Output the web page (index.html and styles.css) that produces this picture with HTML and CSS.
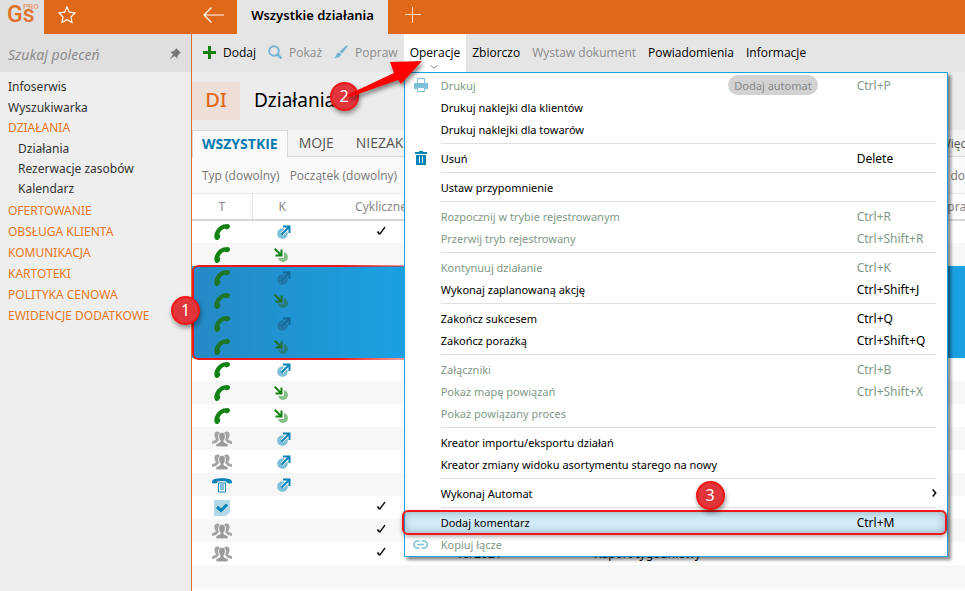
FILE: index.html
```html
<!DOCTYPE html>
<html lang="pl">
<head>
  <meta charset="UTF-8" />
  <meta name="viewport" content="width=device-width, initial-scale=1.0" />
  <title>Wszystkie działania</title>
  <link rel="stylesheet" href="styles.css">
</head>
<body>
  <svg class="sprite" aria-hidden="true">
    <symbol id="i-phone" viewBox="0 0 16 16"><path fill="#128212" d="M.3 12C.5 7.500 4.500 1.500 9.500.4L13.500 0C15.300.2 16.300 1.600 15.900 3L15.200 4.300C14.200 5.400 12.600 5.500 11.400 4.900L10.500 4.600C8 5.500 6 7.800 5.300 10.200L6 11C6.500 12 6.300 13.200 5.600 14L4.500 15.500C3.600 16.300 1.900 16.200 1.200 15.200Q.2 14 .3 12Z"/></symbol>
    <symbol id="i-out" viewBox="0 0 14 14"><circle cx="5.500" cy="8.500" r="5.300" fill="#80bfda"/><path stroke="#fff" stroke-width="3.500" d="M5 9L11 3"/><path fill="none" stroke="#0783b5" stroke-width="2" d="M4.500 9.500L12 2M6 1.500H12.500V8"/></symbol>
    <symbol id="i-in" viewBox="0 0 14 14"><circle cx="9" cy="9" r="5" fill="#88bf88"/><path fill="none" stroke="#fff" stroke-width="3" d="M2 2L8 8M8.500 2.500V8.500H3"/><path fill="none" stroke="#128212" stroke-width="2" d="M.7.7L7 7M7.500 1.500V7.500H1.500"/></symbol>
    <symbol id="i-out-sel" viewBox="0 0 14 14"><circle cx="5.500" cy="8.500" r="5.300" fill="#1c80b4"/><path stroke="#2a90ca" stroke-width="3.500" d="M5 9L11 3"/><path fill="none" stroke="#0b70a4" stroke-width="2" d="M4.500 9.500L12 2M6 1.500H12.500V8"/></symbol>
    <symbol id="i-in-sel" viewBox="0 0 14 14"><circle cx="9" cy="9" r="5" fill="#21887c"/><path fill="none" stroke="#2a90ca" stroke-width="3" d="M2 2L8 8M8.500 2.500V8.500H3"/><path fill="none" stroke="#187a1c" stroke-width="2" d="M.7.7L7 7M7.500 1.500V7.500H1.500"/></symbol>
    <symbol id="i-group" viewBox="0 0 20 16"><g fill="#a3a3a3"><path d="M3 1.500Q6-.5 8 2L6 5L7 9L4 12L0 13V10.500L4 8.500Q1.500 5 3 1.500Z"/><path d="M17 1.500Q14-.5 12 2L14 5L13 9L16 12L20 13V10.500L16 8.500Q18.500 5 17 1.500Z"/></g><path fill="#999" stroke="#fff" stroke-width=".6" d="M10 1.500C12.700 1.500 13.600 3.500 13.200 6Q12.800 8.500 11.800 9.500V11L16 13V15.800H4V13L8.200 11V9.500Q7.200 8.500 6.800 6C6.400 3.500 7.300 1.500 10 1.500Z"/></symbol>
    <symbol id="i-desk" viewBox="0 0 20 15"><path fill="#0783b5" d="M0 4.500C0 1.700 4 .7 10 .7S20 1.700 20 4.500V5.500Q17 6.500 14.500 5V4Q10 3 5.500 4V5Q3 6.500 0 5.500Z"/><path fill="#fff" stroke="#0783b5" d="M6.500 5.500H13.500V14.500H6.500Z"/><path stroke="#0783b5" d="M8 7.500H12M8 9.500H12M8 11.500H12"/></symbol>
    <symbol id="i-task" viewBox="0 0 16 16"><path fill="#b3d9e8" d="M0 0H16V12L12 16H0Z"/><path fill="none" stroke="#0783b5" stroke-width="3" d="M3 7L7 10.500L13 4.500"/></symbol>
    <symbol id="i-check" viewBox="0 0 10 10"><path fill="none" stroke="#111" stroke-width="2" d="M1.500 5.500L3.500 8"/><path fill="none" stroke="#111" stroke-width="1.300" d="M3.500 8.500L9 1"/></symbol>
  </svg>

  <div class="app">
    <header class="topbar">
      <div class="logo"><span class="logo-gs">Gs</span><span class="logo-pro">PRO</span></div>
      <button class="icon-btn star" aria-label="Ulubione"><svg width="18" height="18" viewBox="0 0 18 18"><path fill="none" stroke="#fff" stroke-width="1.200" d="M9 1L11.400 6.200L17 7L13 11L14 16.500L9 13.800L4 16.500L5 11L1 7L6.600 6.200Z"/></svg></button>
      <button class="icon-btn back" aria-label="Wstecz"><svg width="22" height="16" viewBox="0 0 22 16"><path fill="none" stroke="#fff" stroke-width="1.200" d="M21 8H1M8.500.5L1 8L8.500 15.500"/></svg></button>
      <button class="page-tab">Wszystkie działania</button>
      <button class="icon-btn add" aria-label="Nowa karta"><svg width="16" height="16" viewBox="0 0 16 16"><path stroke="#f8d8c0" d="M0 7.500H16M7.500 0V16"/></svg></button>
    </header>

    <div class="body">
      <aside class="sidebar">
        <div class="search">
          <input type="text" placeholder="Szukaj poleceń" aria-label="Szukaj poleceń" />
          <svg width="12" height="12" viewBox="0 0 12 12"><path fill="#777" d="M7 0L12 5L10.500 5.500L8.500 8L8.500 10.500L5.500 8L.5 11.500L4 6.500L1.500 3.500H4L6.500 1.500Z"/></svg>
        </div>
        <nav class="nav">
          <a href="#">Infoserwis</a>
          <a href="#">Wyszukiwarka</a>
          <a href="#" class="group open-group">DZIAŁANIA</a>
          <a href="#" class="sub">Działania</a>
          <a href="#" class="sub">Rezerwacje zasobów</a>
          <a href="#" class="sub">Kalendarz</a>
          <a href="#" class="group">OFERTOWANIE</a>
          <a href="#" class="group">OBSŁUGA KLIENTA</a>
          <a href="#" class="group">KOMUNIKACJA</a>
          <a href="#" class="group">KARTOTEKI</a>
          <a href="#" class="group">POLITYKA CENOWA</a>
          <a href="#" class="group">EWIDENCJE DODATKOWE</a>
        </nav>
      </aside>

      <main class="content">
        <div class="toolbar">
          <button class="tool with-icon"><svg width="13" height="13" viewBox="0 0 13 13"><path stroke="#128212" stroke-width="3" d="M0 6.500H13M6.500 0V13"/></svg>Dodaj</button>
          <button class="tool with-icon off"><svg width="14" height="14" viewBox="0 0 14 14"><circle cx="6" cy="6" r="4.800" fill="none" stroke="#73b5d3" stroke-width="2"/><path stroke="#73b5d3" stroke-width="2.500" d="M9 9L13.500 13.500"/></svg>Pokaż</button>
          <button class="tool with-icon off"><svg width="14" height="14" viewBox="0 0 15 14"><path fill="#73b5d3" d="M14.500 0Q15 1 14 2L8.500 9L6 6.500L12.500.5ZM5.500 7.500L7.800 9.800Q7 13.500 0 13.500Q2.300 12 2.500 10Q3.300 7.500 5.500 7.500Z"/></svg>Popraw</button>
          <div class="dropdown">
            <button class="tool open">Operacje<svg class="chev" width="8" height="4" viewBox="0 0 8 4"><path fill="none" stroke="#888" d="M.5.5L4 3L7.500.5"/></svg></button>
            <div class="menu">
              <button class="item off"><svg width="14" height="14" viewBox="0 0 14 14"><path fill="#80bfda" d="M0 5H14V11H11V9H3V11H0Z"/><path fill="#fff" stroke="#80bfda" d="M3.500.5H10.500V5.500H3.500ZM3.500 9.500H10.500V13.500H3.500Z"/></svg><span>Drukuj</span><kbd>Ctrl+P</kbd><i class="ghost">Dodaj automat</i></button>
              <button class="item"><span>Drukuj naklejki dla klientów</span></button>
              <button class="item"><span>Drukuj naklejki dla towarów</span></button>
              <hr>
              <button class="item"><svg width="12" height="14" viewBox="0 0 12 14"><path fill="#0783b5" d="M4 0H8V1H12V3H0V1H4ZM1 4H11V14H1Z"/><path stroke="#fff" d="M4.500 5.500V12M7.500 5.500V12"/></svg><span>Usuń</span><kbd>Delete</kbd></button>
              <hr>
              <button class="item"><span>Ustaw przypomnienie</span></button>
              <hr>
              <button class="item off"><span>Rozpocznij w trybie rejestrowanym</span><kbd>Ctrl+R</kbd></button>
              <button class="item off"><span>Przerwij tryb rejestrowany</span><kbd>Ctrl+Shift+R</kbd></button>
              <hr>
              <button class="item off"><span>Kontynuuj działanie</span><kbd>Ctrl+K</kbd></button>
              <button class="item"><span>Wykonaj zaplanowaną akcję</span><kbd>Ctrl+Shift+J</kbd></button>
              <hr>
              <button class="item"><span>Zakończ sukcesem</span><kbd>Ctrl+Q</kbd></button>
              <button class="item"><span>Zakończ porażką</span><kbd>Ctrl+Shift+Q</kbd></button>
              <hr>
              <button class="item off"><span>Załączniki</span><kbd>Ctrl+B</kbd></button>
              <button class="item off"><span>Pokaż mapę powiązań</span><kbd>Ctrl+Shift+X</kbd></button>
              <button class="item off"><span>Pokaż powiązany proces</span></button>
              <hr>
              <button class="item"><span>Kreator importu/eksportu działań</span></button>
              <button class="item"><span>Kreator zmiany widoku asortymentu starego na nowy</span></button>
              <hr>
              <button class="item"><span>Wykonaj Automat</span><svg class="more" width="5" height="8" viewBox="0 0 5 8"><path fill="none" stroke="#000" stroke-width="1.500" d="M.7.5L3.700 4L.7 7.500"/></svg></button>
              <hr>
              <button class="item active"><span>Dodaj komentarz</span><kbd>Ctrl+M</kbd><b class="mark mark-item"></b><b class="step step-3">3</b></button>
              <button class="item off"><svg width="15" height="9" viewBox="0 0 15 9"><path fill="none" stroke="#80bfda" stroke-width="1.600" d="M6.500 1H4.300A3.500 3.500 0 0 0 4.300 8H6.500M8.500 1H10.700A3.500 3.500 0 0 1 10.700 8H8.500M4 4.500H11"/></svg><span>Kopiuj łącze</span></button>
            </div>
            <svg class="arrow" width="90" height="50" viewBox="0 0 90 50"><path fill="#f00" d="M3 37L50 15L46 4L78 3L57 26L54 22L6 39Z"/></svg>
            <b class="step step-2">2</b>
          </div>
          <button class="tool">Zbiorczo</button>
          <button class="tool off">Wystaw dokument</button>
          <button class="tool">Powiadomienia</button>
          <button class="tool">Informacje</button>
        </div>

        <div class="title"><span class="badge">DI</span><h1>Działania</h1></div>

        <div class="tabs">
          <button class="tab current">WSZYSTKIE</button>
          <button class="tab">MOJE</button>
          <button class="tab">NIEZAKOŃCZONE</button>
          <button class="tab last">Więcej</button>
        </div>

        <div class="filters">
          <button>Typ (dowolny)</button>
          <button>Początek (dowolny)</button>
          <button class="last">Kontakt do</button>
        </div>

        <div class="grid">
          <table>
            <colgroup><col class="c-t"><col class="c-k"><col class="c-c"><col class="c-n"><col><col class="c-o"></colgroup>
            <thead><tr><th>T</th><th>K</th><th>Cykliczne</th><th></th><th></th><th>Opracował</th></tr></thead>
            <tbody>
              <tr><td><svg class="ph"><use href="#i-phone"/></svg></td><td><svg class="dir"><use href="#i-out"/></svg></td><td><svg class="chk"><use href="#i-check"/></svg></td><td></td><td></td><td></td></tr>
              <tr><td><svg class="ph"><use href="#i-phone"/></svg></td><td><svg class="dir in"><use href="#i-in"/></svg></td><td></td><td></td><td></td><td></td></tr>
              <tr class="sel"><td><svg class="ph"><use href="#i-phone"/></svg></td><td><svg class="dir"><use href="#i-out-sel"/></svg></td><td></td><td></td><td></td><td></td></tr>
              <tr class="sel"><td><svg class="ph"><use href="#i-phone"/></svg></td><td><svg class="dir in"><use href="#i-in-sel"/></svg></td><td></td><td></td><td></td><td></td></tr>
              <tr class="sel"><td><svg class="ph"><use href="#i-phone"/></svg></td><td><svg class="dir"><use href="#i-out-sel"/></svg></td><td></td><td></td><td></td><td></td></tr>
              <tr class="sel"><td><svg class="ph"><use href="#i-phone"/></svg></td><td><svg class="dir in"><use href="#i-in-sel"/></svg></td><td></td><td></td><td></td><td></td></tr>
              <tr><td><svg class="ph"><use href="#i-phone"/></svg></td><td><svg class="dir"><use href="#i-out"/></svg></td><td></td><td></td><td></td><td></td></tr>
              <tr><td><svg class="ph"><use href="#i-phone"/></svg></td><td><svg class="dir in"><use href="#i-in"/></svg></td><td></td><td></td><td></td><td></td></tr>
              <tr><td><svg class="ph"><use href="#i-phone"/></svg></td><td><svg class="dir in"><use href="#i-in"/></svg></td><td></td><td></td><td></td><td></td></tr>
              <tr><td><svg class="grp"><use href="#i-group"/></svg></td><td><svg class="dir"><use href="#i-out"/></svg></td><td></td><td></td><td></td><td></td></tr>
              <tr><td><svg class="grp"><use href="#i-group"/></svg></td><td><svg class="dir"><use href="#i-out"/></svg></td><td></td><td></td><td></td><td></td></tr>
              <tr><td><svg class="grp"><use href="#i-desk"/></svg></td><td><svg class="dir"><use href="#i-out"/></svg></td><td></td><td></td><td></td><td></td></tr>
              <tr><td><svg class="ph"><use href="#i-task"/></svg></td><td></td><td><svg class="chk"><use href="#i-check"/></svg></td><td></td><td></td><td></td></tr>
              <tr><td><svg class="grp"><use href="#i-group"/></svg></td><td></td><td><svg class="chk"><use href="#i-check"/></svg></td><td></td><td></td><td></td></tr>
              <tr><td><svg class="grp"><use href="#i-group"/></svg></td><td></td><td><svg class="chk"><use href="#i-check"/></svg></td><td>10/2021</td><td>Raport tygodniowy</td><td></td></tr>
              <tr><td></td><td></td><td></td><td></td><td></td><td></td></tr>
            </tbody>
          </table>
          <b class="mark mark-rows"></b>
          <b class="step step-1">1</b>
        </div>
      </main>
    </div>
  </div>
</body>
</html>
```
FILE: styles.css
```css
* { margin:0; padding:0; box-sizing:border-box; }
body {
  font-family:"Noto Sans", "Open Sans", sans-serif;
  font-size:12px; color:#000; background:#fff;
  height:100vh; overflow:hidden;
}
button { font:inherit; color:inherit; background:none; border:none; cursor:pointer; white-space:nowrap; }
a { text-decoration:none; color:inherit; }
svg { flex:none; }
.sprite { position:absolute; width:0; height:0; }
.app { display:flex; flex-direction:column; height:100%; }

.topbar { display:flex; align-items:stretch; height:34px; background:#df6919; flex:none; }
.logo { width:44px; background:#e0e0e0; color:#e0702a; display:flex; padding-left:7px; align-items:flex-start; }
.logo-gs { font:500 23px/30px Roboto, sans-serif; width:16px; }
.logo-pro { font:500 8px/14px Roboto, sans-serif; color:#e39468; }
.icon-btn { display:flex; align-items:center; justify-content:center; width:46px; padding-bottom:4px; }
.star + .back { margin-left:100px; width:47px; }
.page-tab { background:#e5e5e5; font-size:13px; font-weight:600; width:151px; padding-bottom:5px; }
.add { width:50px; }

.body { flex:1; display:flex; min-height:0; }
.sidebar { width:192px; flex:none; background:#eee; border-right:1px solid #d8702c; }
.search { display:flex; align-items:center; height:38px; padding:2px 10px 0 8px; background:#dfdfdf; }
.search input { flex:1; min-width:0; border:none; outline:none; background:none; font:italic 14px "Noto Sans", sans-serif; }
.search input::placeholder { color:#8c8c8c; }
.nav { display:flex; flex-direction:column; padding-top:4px; }
.nav a { font-size:12px; line-height:21px; padding-left:8px; color:#333; }
.nav .sub { line-height:20px; padding-left:18px; }
.nav .group { color:#e87722; }
.nav .open-group { line-height:20px; margin-bottom:1px; }
.nav .sub + .group { margin-top:1px; }

.content { flex:1; min-width:0; display:flex; flex-direction:column; }
.toolbar { display:flex; height:38px; background:#e5e5e5; padding-left:5px; flex:none; font-family:"Open Sans", sans-serif; }
.tool { padding:0 6px 2px; height:38px; }
.with-icon { display:flex; align-items:center; gap:7px; }
.tool.off { color:#8a8a8a; }
.dropdown { position:relative; }
.open { background:#fff; }
.chev { position:absolute; left:26px; bottom:3px; }

.menu {
  position:absolute; top:38px; left:0; width:544px; z-index:5;
  background:#fff; border:1px solid #1ba1e2; padding:2px 0 0;
  box-shadow:3px 3px 3px rgba(0,0,0,0.45);
  font-size:11px; font-family:"Noto Sans", sans-serif;
}
.item {
  position:relative; display:grid; width:100%; height:22px;
  grid-template-columns:32px 1fr 90px; align-items:center;
  padding:0 0 2px 4px; text-align:left;
}
.item span { grid-column:2; grid-row:1; }
.item svg { grid-column:1; grid-row:1; justify-self:center; margin-right:8px; }
.item kbd { grid-column:3; grid-row:1; font:inherit; font-size:12px; }
.item .more { grid-column:3; justify-self:end; margin-right:10px; }
.item.off { color:#809a88; }
.item.active { background:#d4ebf9; }
.menu hr { border:none; border-top:1px solid #e0e0e0; margin:2px 11px 4px 36px; }
.ghost {
  position:absolute; right:129px; top:0; height:20px; padding:0 6px;
  border-radius:10px; background:#d2d2d2; color:#888; font-style:normal; line-height:21px;
}

.mark { position:absolute; border:2px solid #f01818; border-radius:6px; pointer-events:none; }
.mark-item { left:-3px; right:0; top:-2px; bottom:-1px; box-shadow:inset 0 0 8px rgba(70,100,120,0.5), 0 2px 4px rgba(0,0,0,0.3); }
.mark-rows {
  left:0; top:71px; width:270px; height:95px;
  background:linear-gradient(90deg, rgba(70,70,110,0.25), transparent 80%);
  mask-image:linear-gradient(90deg, #000 55%, transparent 95%);
}
.step {
  position:absolute; z-index:7; width:29px; height:29px; border-radius:50%;
  border:2px solid #f51717; background:#e0353b; color:#fff;
  font:16px/25px "Noto Sans", sans-serif; text-align:center;
  box-shadow:1px 3px 5px rgba(0,0,0,0.4);
}
.step-1 { left:-21px; top:102px; }
.step-2 { left:-74px; top:48px; }
.step-3 { left:291px; top:-31px; }
.arrow { position:absolute; z-index:8; left:-60px; top:24px; filter:drop-shadow(2px 3px 2px rgba(0,0,0,0.45)); }

.title { display:flex; align-items:center; height:58px; background:#ececec; flex:none; }
.badge { width:48px; height:38px; background:#eeded6; color:#e06a1c; font-size:20px; font-weight:500; line-height:36px; text-align:center; }
.title h1 { font-size:19px; font-weight:400; margin-left:14px; padding-bottom:2px; }

.tabs { display:flex; height:27px; background:#f3f3f3; flex:none; border-bottom:1px solid #d8d8d8; font-family:"Open Sans", sans-serif; }
.tab { padding:0 11px 1px; font-size:14px; color:#555; }
.tab.current { height:27px; padding:0 9px 2px; background:#fafafa; color:#0079b0; font-weight:700; border:1px solid #d8d8d8; border-bottom:none; }
.tabs .last { margin-left:auto; font-size:12px; padding:0; margin-right:-11px; }
.filters { display:flex; gap:10px; height:37px; padding-left:10px; background:#fafafa; color:#777; flex:none; border-bottom:1px solid #e8e8e8; font-family:"Open Sans", sans-serif; }
.filters .last { margin-left:auto; }

.grid { flex:1; position:relative; min-height:0; }
table { width:100%; border-collapse:collapse; table-layout:fixed; }
.c-t { width:60px; }
.c-k { width:60px; }
.c-c { width:138px; }
.c-n { width:138px; }
.c-o { width:27px; }
th { height:26px; font-weight:400; color:#888; border-bottom:2px solid #d8d8d8; background:#fff; }
th:first-child { border-right:1px dotted #ccc; }
th:last-child { text-align:left; }
td { height:23px; text-align:center; vertical-align:middle; line-height:0; }
td:nth-child(4), td:nth-child(5) { text-align:left; padding-left:6px; }
tbody tr:nth-child(even) { background:#f7f7f7; }
tbody .sel, tbody .sel:nth-child(even) { background:#1ba1e2; }
.ph { width:16px; height:16px; }
.dir { width:14px; height:14px; margin-left:4px; }
.dir.in { margin-left:-3px; }
.grp { width:20px; height:16px; }
.chk { width:10px; height:10px; margin-bottom:3px; }
```
